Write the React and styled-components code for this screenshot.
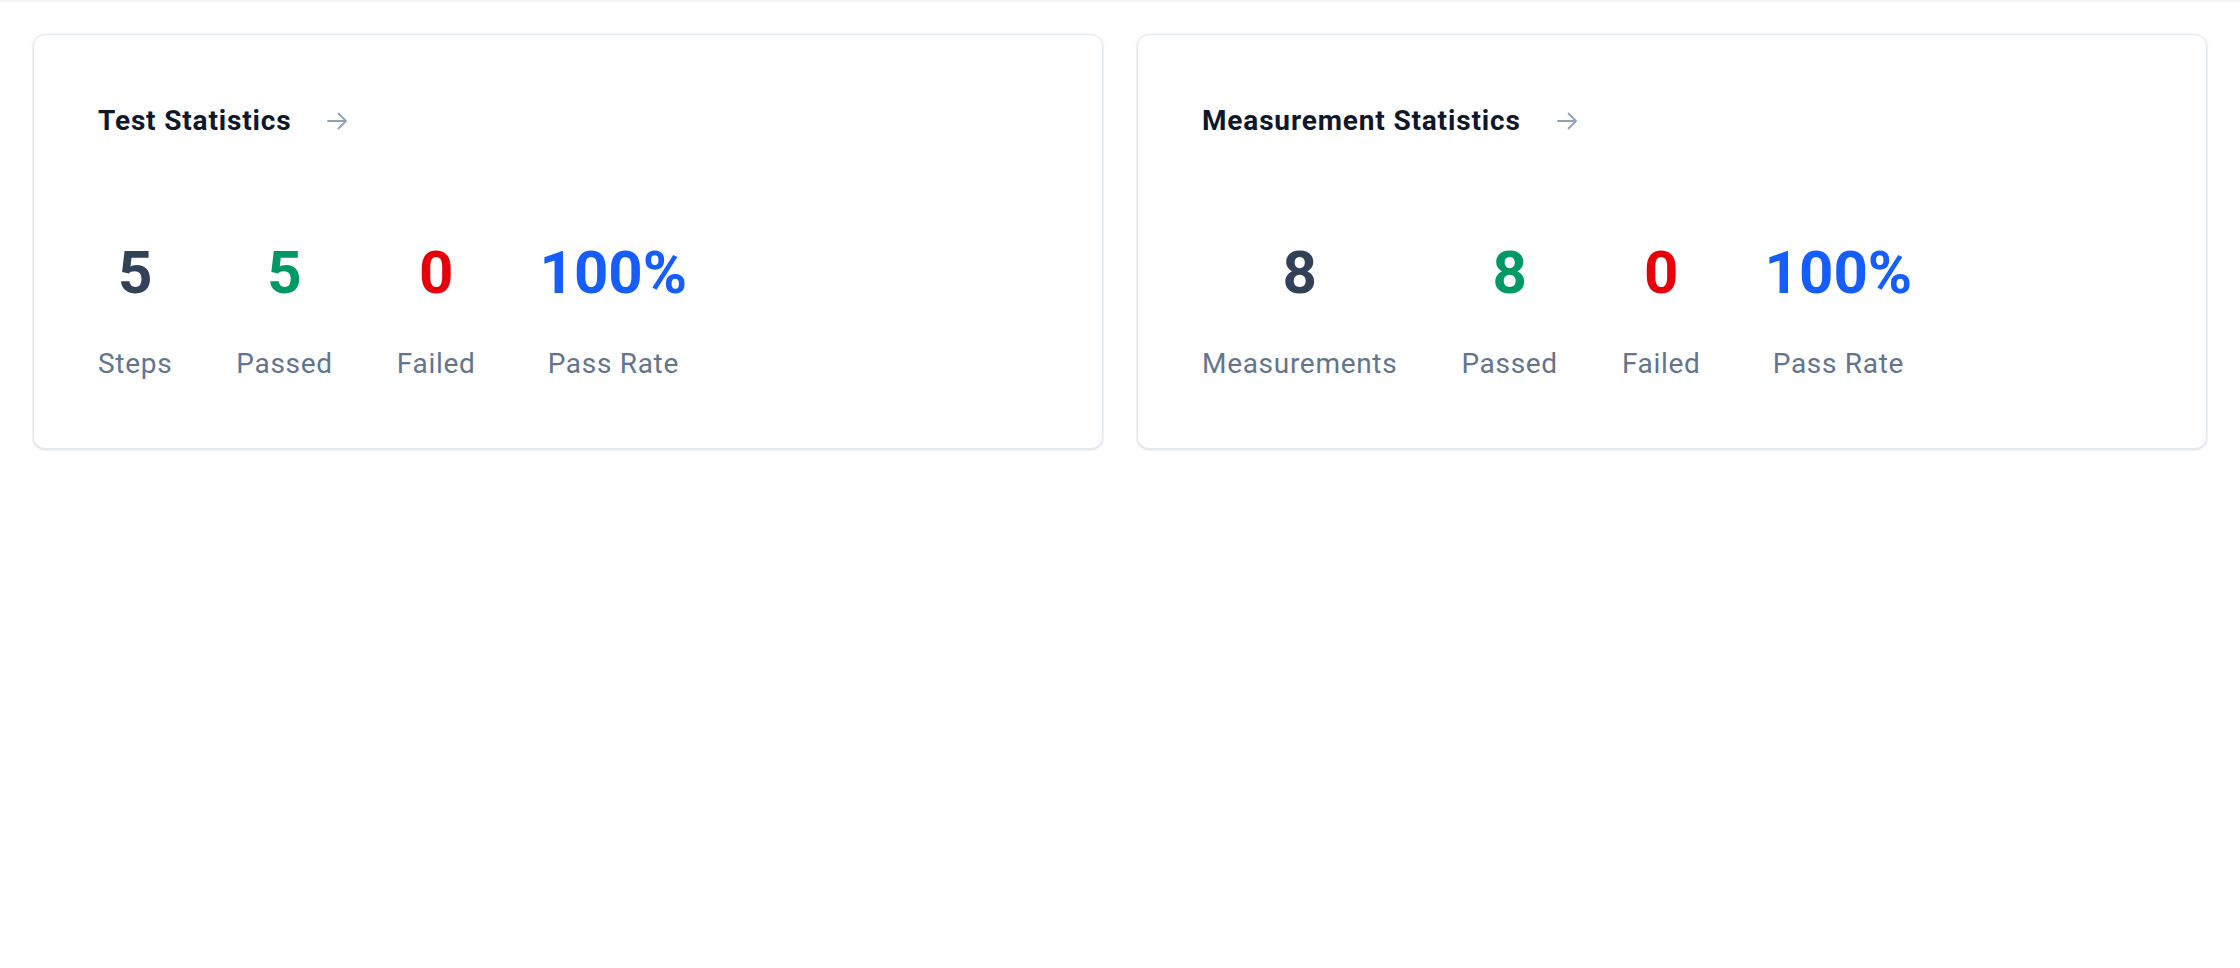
import React from "react";
import styled, { createGlobalStyle } from "styled-components";

const GlobalStyle = createGlobalStyle`
  html, body {
    margin: 0;
    padding: 0;
    background: #ffffff;
    font-family: Roboto, "Liberation Sans", Arial, sans-serif;
  }
`;

const TopStrip = styled.div`
  height: 2px;
  background: #f5f6f8;
`;

const Page = styled.div`
  padding: 32px 33px;
  display: grid;
  grid-template-columns: 1fr 1fr;
  gap: 34px;
  align-items: start;
`;

const Card = styled.section`
  background: #ffffff;
  border: 1px solid #e2e8f0;
  border-radius: 12px;
  box-shadow: 0 1px 3px rgba(15, 23, 42, 0.1), 0 1px 2px rgba(15, 23, 42, 0.05);
  padding: 65px 64px 64px;
`;

const Header = styled.div`
  display: flex;
  align-items: center;
  gap: 34px;
  margin-bottom: 95px;
`;

const Title = styled.h2`
  margin: 0;
  font-size: 28px;
  line-height: 42px;
  font-weight: 700;
  letter-spacing: 0.03em;
  color: #0f172b;
`;

const ArrowLink = styled.a`
  display: flex;
  align-items: center;
  color: #90a1b9;
  cursor: pointer;
`;

const StatsRow = styled.div`
  display: flex;
  gap: 64px;
`;

const Stat = styled.div`
  display: flex;
  flex-direction: column;
  align-items: center;
`;

const Value = styled.div`
  font-size: 60px;
  line-height: 72px;
  font-weight: 700;
  color: ${(p) => p.$color};
  margin-bottom: 35px;
`;

const Label = styled.div`
  font-size: 28px;
  line-height: 40px;
  letter-spacing: 0.025em;
  color: #62748e;
`;

const colors = {
  total: "#314158",
  passed: "#009966",
  failed: "#e7000b",
  rate: "#155dfc",
};

const ArrowIcon = () => (
  <svg width="24" height="24" viewBox="0 0 24 24" fill="none" stroke="currentColor" strokeWidth="1.8" strokeLinecap="round" strokeLinejoin="round">
    <path d="M13.5 4.5 21 12m0 0-7.5 7.5M21 12H3" />
  </svg>
);

const StatCard = ({ title, stats }) => (
  <Card>
    <Header>
      <Title>{title}</Title>
      <ArrowLink>
        <ArrowIcon />
      </ArrowLink>
    </Header>
    <StatsRow>
      {stats.map((s) => (
        <Stat key={s.label}>
          <Value $color={s.color}>{s.value}</Value>
          <Label>{s.label}</Label>
        </Stat>
      ))}
    </StatsRow>
  </Card>
);

const App = () => {
  const testStats = [
    { label: "Steps", value: 5, color: colors.total },
    { label: "Passed", value: 5, color: colors.passed },
    { label: "Failed", value: 0, color: colors.failed },
    { label: "Pass Rate", value: "100%", color: colors.rate },
  ];
  const measurementStats = [
    { label: "Measurements", value: 8, color: colors.total },
    { label: "Passed", value: 8, color: colors.passed },
    { label: "Failed", value: 0, color: colors.failed },
    { label: "Pass Rate", value: "100%", color: colors.rate },
  ];

  return (
    <>
      <GlobalStyle />
      <TopStrip />
      <Page>
        <StatCard title="Test Statistics" stats={testStats} />
        <StatCard title="Measurement Statistics" stats={measurementStats} />
      </Page>
    </>
  );
};

export default App;
